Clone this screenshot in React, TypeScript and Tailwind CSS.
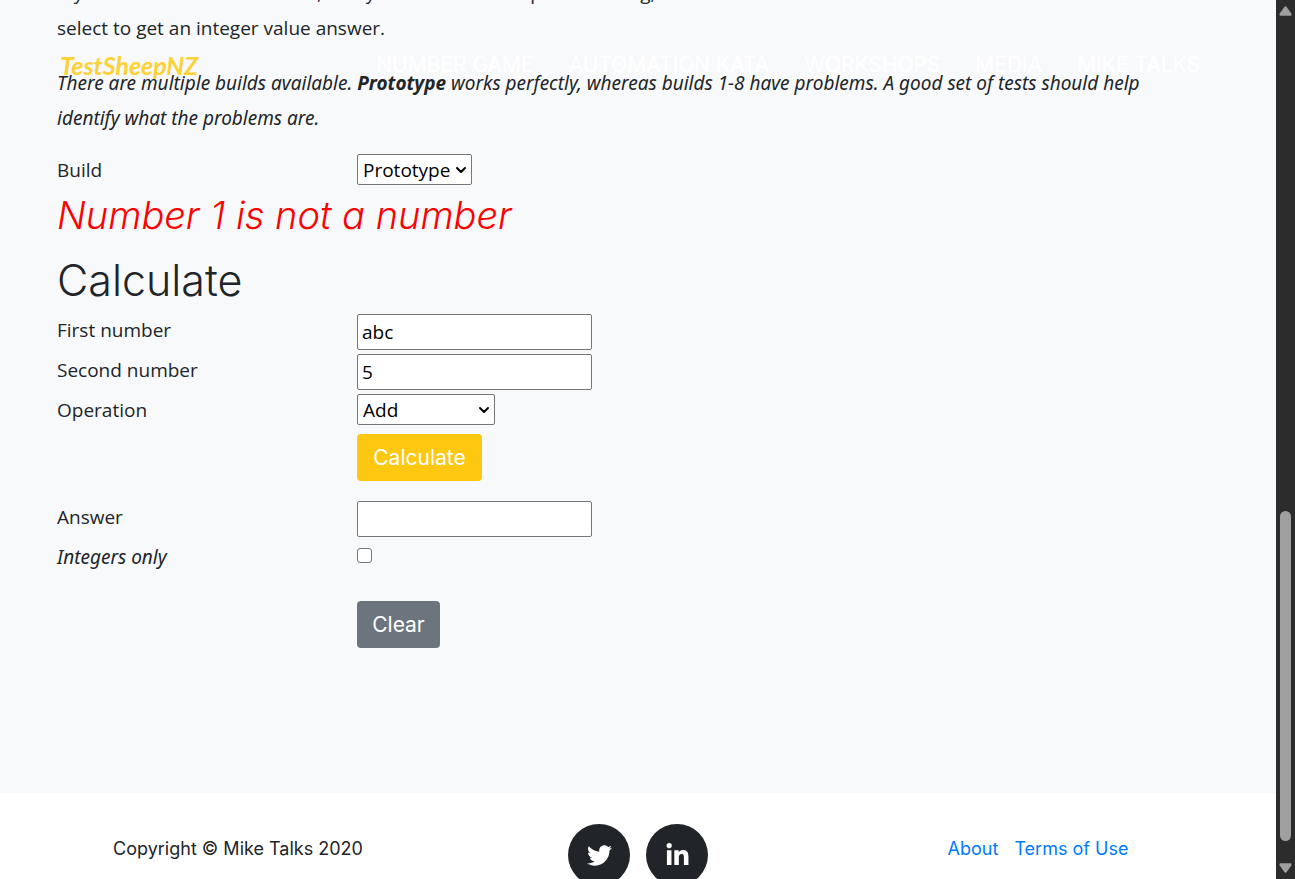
import { useState } from "react";
import type { ReactNode } from "react";
import { FaLinkedinIn, FaTwitter } from "react-icons/fa";
import { ChevronDown } from "lucide-react";

const navItems = ["Number Game", "Automation Kata", "Workshops", "Media", "Mike Talks"];

const inputClass =
  "h-9 w-[235px] rounded-[2px] border border-[#767676] bg-white px-1 text-[19px] text-black";

function Row({ id, label, children }: { id: string; label: ReactNode; children: ReactNode }) {
  return (
    <div className="flex h-10 items-start">
      <label htmlFor={id} className="w-[300px] leading-[33px]">
        {label}
      </label>
      {children}
    </div>
  );
}

function Select({ id, options, width }: { id: string; options: string[]; width: string }) {
  return (
    <div className={"relative " + width}>
      <select
        id={id}
        className="h-[31px] w-full appearance-none rounded-[2px] border border-[#767676] bg-white px-[5px] text-[19px] leading-7 text-black"
      >
        {options.map((o) => (
          <option key={o}>{o}</option>
        ))}
      </select>
      <ChevronDown
        className="pointer-events-none absolute top-2 right-[3px] size-4 text-black"
        strokeWidth={3}
      />
    </div>
  );
}

function ScrollTrack() {
  return (
    <div className="flex w-[19px] shrink-0 flex-col items-center justify-between bg-[#2c2c2c] py-1.5">
      <svg width="13" height="10" viewBox="0 0 13 10" fill="#9f9f9f">
        <path d="M5.5 .7Q6.5-.3 7.500 .7L12.300 7.500Q13 9.600 11.500 9.800H1.500Q0 9.600.7 7.500Z" />
      </svg>
      <div className="flex w-full flex-1 flex-col items-center justify-end pb-[22px]">
        <div className="h-[40%] w-[11px] rounded-full bg-[#9f9f9f]" />
      </div>
      <svg width="13" height="10" viewBox="0 0 13 10" fill="#9f9f9f">
        <path d="M1.500 .2H11.500Q13 .4 12.300 2.500L7.500 9.300Q6.500 10.300 5.500 9.300L.7 2.500Q0 .4 1.500 .2Z" />
      </svg>
    </div>
  );
}

export default function App() {
  const [first, setFirst] = useState("abc");
  const [second, setSecond] = useState("5");
  const [answer, setAnswer] = useState("");

  return (
    <div className="flex h-screen overflow-hidden bg-[#f8f9fb] font-['Open_Sans','Noto_Sans',sans-serif] text-[19px] text-[#212529]">
      <div className="relative flex min-w-0 flex-1 flex-col">
        <nav className="absolute inset-x-0 top-0 flex items-center justify-between pt-[47px] pr-[76px] pl-[60px]">
          <a href="#top" className="font-['Lato',cursive] text-[25px] leading-9 font-bold text-[#fed136] italic">
            TestSheepNZ
          </a>
          <ul className="flex gap-[35px] font-['Inter',sans-serif] text-[21px] leading-9 text-white uppercase">
            {navItems.map((n) => (
              <li key={n}>
                <a href="#top">{n}</a>
              </li>
            ))}
          </ul>
        </nav>

        <main className="shrink-0 px-[57px] pb-[145px]">
          <p className="-mt-6 mb-5 leading-[35px]">
            If you divide several numbers, and you do not want a precise rating,
            <br />
            select to get an integer value answer.
          </p>
          <p className="mb-[18px] pr-6 font-['Noto_Sans',sans-serif] leading-[35px] italic">
            There are multiple builds available. <b>Prototype</b> works perfectly, whereas builds 1-8
            have problems. A good set of tests should help identify what the problems are.
          </p>

          <Row id="build" label="Build">
            <Select id="build" options={["Prototype", "1", "2", "3", "4", "5", "6", "7", "8"]} width="w-[115px]" />
          </Row>
          <p className="mb-[18px] font-['Inter',sans-serif] text-[38px] leading-[42px] font-light text-[#ff0000] italic">
            Number 1 is not a number
          </p>
          <h2 className="mb-2 font-['Inter',sans-serif] text-[43px] leading-[52px] font-light">
            Calculate
          </h2>

          <form onSubmit={(e) => e.preventDefault()}>
            <Row id="first" label="First number">
              <input id="first" className={inputClass} value={first} onChange={(e) => setFirst(e.target.value)} />
            </Row>
            <Row id="second" label="Second number">
              <input id="second" className={inputClass} value={second} onChange={(e) => setSecond(e.target.value)} />
            </Row>
            <Row id="operation" label="Operation">
              <Select id="operation" options={["Add", "Subtract", "Multiply", "Divide", "Concatenate"]} width="w-[138px]" />
            </Row>
            <div className="mb-5 pl-[300px]">
              <button
                type="submit"
                className="block h-[47px] w-[125px] rounded bg-[#fec810] font-['Inter',sans-serif] text-[21px] text-white"
              >
                Calculate
              </button>
            </div>
            <Row id="answer" label="Answer">
              <input id="answer" readOnly className={inputClass} value={answer} />
            </Row>
            <Row id="integers" label={<i className="font-['Noto_Sans',sans-serif]">Integers only</i>}>
              <input
                id="integers"
                type="checkbox"
                className="mt-[7px] size-[15px] appearance-none rounded-[3px] border border-[#767676] bg-white checked:bg-blue-600"
              />
            </Row>
            <div className="pt-5 pl-[300px]">
              <button
                type="button"
                onClick={() => setAnswer("")}
                className="block h-[47px] w-[83px] rounded bg-[#6c757d] font-['Inter',sans-serif] text-[21px] text-white"
              >
                Clear
              </button>
            </div>
          </form>
        </main>

        <footer className="grid shrink-0 grid-cols-3 bg-white px-[38px] pt-[31px] pb-8 text-center font-['Inter',sans-serif] text-[18px] leading-[50px]">
          <span>Copyright © Mike Talks 2020</span>
          <div className="flex justify-center gap-4">
            <a href="#twitter" aria-label="Twitter" className="flex size-[62px] items-center justify-center rounded-full bg-[#212529] text-white">
              <FaTwitter size={25} />
            </a>
            <a href="#linkedin" aria-label="LinkedIn" className="flex size-[62px] items-center justify-center rounded-full bg-[#212529] text-white">
              <FaLinkedinIn size={25} />
            </a>
          </div>
          <div className="flex justify-center gap-4 text-[#007bff]">
            <a href="#about">About</a>
            <a href="#terms">Terms of Use</a>
          </div>
        </footer>
      </div>
      <ScrollTrack />
    </div>
  );
}
